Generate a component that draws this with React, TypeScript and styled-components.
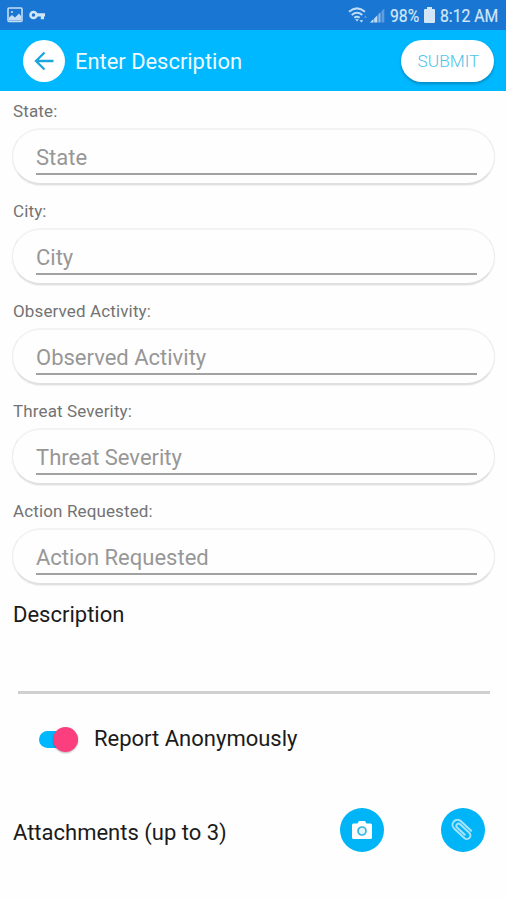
import React, { useState } from 'react';
import styled, { createGlobalStyle } from 'styled-components';

const GlobalStyle = createGlobalStyle`
  * { box-sizing: border-box; }
  body {
    margin: 0;
    background: #fefefe;
    font-family: Roboto, sans-serif;
  }
  button { font-family: inherit; border: 0; padding: 0; cursor: pointer; }
`;

const Screen = styled.div`
  display: flex;
  flex-direction: column;
  width: 506px;
  height: 900px;
  overflow: hidden;
  background: #fefefe;
`;

const StatusBar = styled.div`
  display: flex;
  align-items: center;
  height: 30px;
  flex: none;
  padding: 0 8px 0 7px;
  background: #1976d2;
  color: #d3e6f8;
`;

const StatusIcons = styled.div`
  display: flex;
  align-items: center;
  gap: 6px;
  flex: 1;
`;

const StatusText = styled.span<{ $width: number }>`
  width: ${(p) => p.$width}px;
  flex: none;
  font-size: 18.3px;
  line-height: 30px;
  padding-top: 1px;
  white-space: nowrap;
  -webkit-text-stroke: 0.2px #d3e6f8;
  transform: scaleX(0.86);
  transform-origin: left center;
`;

const Header = styled.header`
  display: flex;
  align-items: center;
  height: 61px;
  flex: none;
  padding: 0 12px 0 23px;
  background: #00b8ff;
`;

const BackButton = styled.button`
  display: flex;
  align-items: center;
  justify-content: center;
  width: 42px;
  height: 42px;
  border-radius: 50%;
  background: #fff;
`;

const Title = styled.h1`
  flex: 1;
  margin: 2px 0 0 10px;
  font-size: 21.9px;
  font-weight: 400;
  line-height: 30px;
  color: #effaff;
`;

const SubmitButton = styled.button`
  width: 93px;
  height: 42px;
  border-radius: 21px;
  padding: 1px 0 0 2px;
  background: #fff;
  color: #4fc3e8;
  font-size: 17.3px;
  font-weight: 300;
  box-shadow: 0 2px 3px rgba(0, 70, 110, 0.4);
`;

const Field = styled.label`
  display: flex;
  flex-direction: column;
  height: 100px;
  flex: none;
  padding: 9px 11px 0 12px;
`;

const FieldLabel = styled.span`
  height: 28px;
  padding-left: 1px;
  font-size: 17px;
  letter-spacing: 0.13px;
  line-height: 23px;
  color: #737373;
`;

const FieldCard = styled.span`
  display: flex;
  height: 57px;
  border-radius: 29px;
  border: 1px solid #ececec;
  border-top: 2px solid #f3f3f3;
  border-bottom: 2px solid #e0e0e0;
  padding: 10px 17px 0 23px;
  background: #fefefe;
  box-shadow: 0 1px 1px rgba(0, 0, 0, 0.06);
`;

const FieldInput = styled.input`
  width: 100%;
  height: 35px;
  padding: 1px 0 0;
  border: 0;
  border-bottom: 2px solid #a2a2a2;
  outline: 0;
  background: transparent;
  font-family: inherit;
  font-size: 22px;
  color: #333;
  &::placeholder { color: #979797; opacity: 1; }
`;

const Description = styled.section`
  display: flex;
  flex-direction: column;
  height: 103px;
  flex: none;
  padding: 10px 16px 0 13px;
`;

const BodyText = styled.span`
  font-size: 22px;
  line-height: 28px;
  color: #1b1b1b;
`;

const DescriptionInput = styled.textarea`
  height: 65px;
  margin-left: 5px;
  resize: none;
  border: 0;
  border-bottom: 3px solid #d0d0d0;
  outline: 0;
  background: transparent;
  font: 22px Roboto, sans-serif;
`;

const ToggleRow = styled.div`
  display: flex;
  align-items: center;
  gap: 16px;
  height: 26px;
  margin: 32px 0 0 39px;
`;

const Track = styled.button`
  display: flex;
  align-items: center;
  width: 39px;
  height: 17px;
  border-radius: 9px;
  background: #00b8ff;
`;

const Thumb = styled.span<{ $on: boolean }>`
  width: 25px;
  height: 25px;
  flex: none;
  margin-left: ${(p) => (p.$on ? 14 : 0)}px;
  border-radius: 50%;
  background: #fb3f7e;
  box-shadow: 0 1px 2px rgba(0, 0, 0, 0.3);
`;

const Attachments = styled.div`
  display: flex;
  align-items: center;
  height: 44px;
  margin-top: 56px;
  padding: 0 21px 0 13px;
`;

const AttachmentsLabel = styled.div`
  flex: 1;
  padding-top: 5px;
`;

const AttachmentActions = styled.div`
  display: flex;
  gap: 57px;
`;

const RoundButton = styled.button`
  display: flex;
  align-items: center;
  justify-content: center;
  width: 44px;
  height: 44px;
  border-radius: 50%;
  background: #00b4f8;
`;

const PhotoIcon = () => (
  <svg width="16" height="16" viewBox="0 0 16 16">
    <rect x="1" y="1" width="14" height="13.5" rx="1" fill="none" stroke="#c5def5" strokeWidth="1.6" />
    <path d="M2 10.5 5 8 8 10.5 12 6.5 14 9V13.5H2Z" fill="#c5def5" />
    <circle cx="5" cy="5" r="1.1" fill="#c5def5" />
  </svg>
);

const KeyIcon = () => (
  <svg width="17" height="12" viewBox="0 0 17 12">
    <circle cx="4.5" cy="6" r="3" fill="none" stroke="#d0e5f8" strokeWidth="2.6" />
    <path d="M8 4.3H16V7.4H15V10.3H11.8V7.4H8Z" fill="#d0e5f8" />
  </svg>
);

const WifiIcon = () => (
  <svg width="20" height="18" viewBox="0 0 20 18" fill="none" stroke="#bddbf5" strokeWidth="2">
    <path d="M1 5.8Q9 -1.1 17 5.8" />
    <path d="M3.7 8.9Q9 4.5 14.3 8.9" />
    <path d="M6.3 11.8Q9 9.7 11.7 11.8" />
    <path d="M7.2 13.3H10.8L9 15.5Z" fill="#d3e6f8" stroke="none" />
    <path d="M11.5 14.2H15.3L13.4 16.6Z" fill="#d3e6f8" stroke="none" />
    <path d="M15.8 11.8 17.5 9.6 19.2 11.8Z" fill="#659fdd" stroke="none" />
  </svg>
);

const SignalIcon = () => (
  <svg width="15" height="15" viewBox="0 0 15 15">
    <path d="M0 14.5 3.5 11V14.5Z" fill="#d3e6f8" />
    <path d="M4.2 10.4 7.4 7.3V14.5H4.2Z" fill="#c2dcf5" />
    <path d="M8.4 6.3 10.5 4.2V14.5H8.4Z" fill="#8fbbea" />
    <path d="M11.5 3.3 14.3 .5V14.5H11.5Z" fill="#5f9ddf" />
  </svg>
);

const BatteryIcon = () => (
  <svg width="11" height="16" viewBox="0 0 11 16">
    <path d="M3 0H8V2H10Q11 2 11 3V15Q11 16 10 16H1Q0 16 0 15V3Q0 2 1 2H3Z" fill="#d3e6f8" />
  </svg>
);

const ArrowIcon = () => (
  <svg width="22" height="20" viewBox="0 0 22 20" fill="none" stroke="#1ba7dc" strokeWidth="2.3">
    <path d="M20.5 10H3M11.5 1.5 3 10 11.5 18.5" />
  </svg>
);

const CameraIcon = () => (
  <svg width="20" height="18" viewBox="0 0 20 18">
    <path d="M1.5 2.5H5.5L7 0H13L14.5 2.5H18.5Q20 2.5 20 4V16.5Q20 18 18.5 18H1.5Q0 18 0 16.5V4Q0 2.5 1.5 2.5Z" fill="#fff" />
    <circle cx="10" cy="10" r="4" fill="#e5f7fe" stroke="#36b4e3" strokeWidth="1.7" />
  </svg>
);

const ClipIcon = () => (
  <svg width="24" height="22" viewBox="0 0 24 22" fill="none" stroke="#a5e3fb" strokeWidth="2" strokeLinecap="round">
    <g transform="rotate(43 12 11)">
      <path d="M18.5 6H4.5A5 5 0 0 0 4.5 16H18.5A3.6 3.6 0 0 0 18.5 8.8H6A2.2 2.2 0 0 0 6 13.2H16.5" />
    </g>
  </svg>
);

const Spacer = styled.span<{ $w: number }>`
  width: ${(p) => p.$w}px;
  flex: none;
`;

const FIELDS = ['State', 'City', 'Observed Activity', 'Threat Severity', 'Action Requested'];

export default function App() {
  const [anonymous, setAnonymous] = useState(true);
  return (
    <>
      <GlobalStyle />
      <Screen>
        <StatusBar>
          <StatusIcons>
            <PhotoIcon />
            <KeyIcon />
          </StatusIcons>
          <WifiIcon />
          <Spacer $w={2} />
          <SignalIcon />
          <Spacer $w={5} />
          <StatusText $width={34}>98%</StatusText>
          <BatteryIcon />
          <Spacer $w={5} />
          <StatusText $width={58}>8:12 AM</StatusText>
        </StatusBar>
        <Header>
          <BackButton aria-label="Back">
            <ArrowIcon />
          </BackButton>
          <Title>Enter Description</Title>
          <SubmitButton>SUBMIT</SubmitButton>
        </Header>
        {FIELDS.map((name) => (
          <Field key={name}>
            <FieldLabel>{name}:</FieldLabel>
            <FieldCard>
              <FieldInput placeholder={name} />
            </FieldCard>
          </Field>
        ))}
        <Description>
          <BodyText>Description</BodyText>
          <DescriptionInput aria-label="Description" />
        </Description>
        <ToggleRow>
          <Track role="switch" aria-checked={anonymous} onClick={() => setAnonymous(!anonymous)}>
            <Thumb $on={anonymous} />
          </Track>
          <BodyText>Report Anonymously</BodyText>
        </ToggleRow>
        <Attachments>
          <AttachmentsLabel>
            <BodyText>Attachments (up to 3)</BodyText>
          </AttachmentsLabel>
          <AttachmentActions>
            <RoundButton aria-label="Take photo">
              <CameraIcon />
            </RoundButton>
            <RoundButton aria-label="Attach file">
              <ClipIcon />
            </RoundButton>
          </AttachmentActions>
        </Attachments>
      </Screen>
    </>
  );
}
